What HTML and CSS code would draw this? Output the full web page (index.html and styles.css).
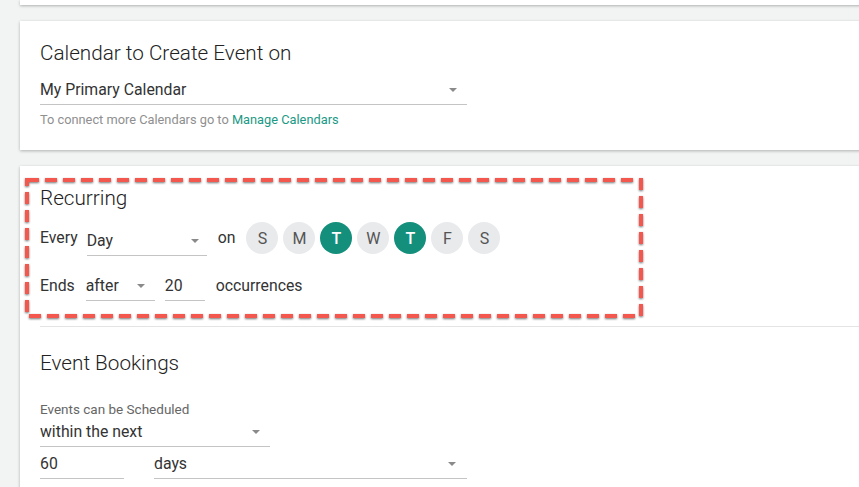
FILE: index.html
```html
<!DOCTYPE html>
<html>
<head>
<meta charset="utf-8">
<link rel="stylesheet" href="styles.css">
</head>
<body>
<div class="page">
  <div class="card card-stub"></div>

  <div class="card card-cal">
    <h2 class="title">Calendar to Create Event on</h2>
    <div class="field field-cal">
      <span class="value">My Primary Calendar</span>
      <span class="arrow"></span>
    </div>
    <p class="hint">To connect more Calendars go to <a class="link">Manage Calendars</a></p>
  </div>

  <div class="card card-main">
    <section class="recurring">
      <h2 class="title">Recurring</h2>
      <div class="row row-every">
        <span class="label">Every</span>
        <div class="field field-every">
          <span class="value">Day</span>
          <span class="arrow"></span>
        </div>
        <span class="label label-on">on</span>
        <div class="days">
          <span class="day">S</span>
          <span class="day">M</span>
          <span class="day on">T</span>
          <span class="day">W</span>
          <span class="day on">T</span>
          <span class="day">F</span>
          <span class="day">S</span>
        </div>
      </div>
      <div class="row row-ends">
        <span class="label">Ends</span>
        <div class="field field-after">
          <span class="value">after</span>
          <span class="arrow"></span>
        </div>
        <div class="field field-count">
          <span class="value">20</span>
        </div>
        <span class="label label-occ">occurrences</span>
      </div>
      <svg class="highlight" width="626" height="146" viewBox="0 0 626 146">
        <rect x="3" y="3" width="614" height="136" fill="none" stroke="#f4574e" stroke-width="4" stroke-dasharray="12 6"/>
      </svg>
    </section>

    <hr class="divider">

    <section class="bookings">
      <h2 class="title">Event Bookings</h2>
      <p class="sub">Events can be Scheduled</p>
      <div class="field field-within">
        <span class="value">within the next</span>
        <span class="arrow"></span>
      </div>
      <div class="row row-range">
        <div class="field field-num"><span class="value">60</span></div>
        <div class="field field-unit">
          <span class="value">days</span>
          <span class="arrow"></span>
        </div>
      </div>
    </section>
  </div>
</div>
</body>
</html>
```

FILE: styles.css
```css
html, body {
  margin: 0;
  padding: 0;
  background: #f2f3f3;
  overflow: hidden;
  height: 487px;
}

body {
  font-family: Roboto, "Liberation Sans", Arial, sans-serif;
  color: #333;
}

.page {
  margin-left: 20px;
  width: 900px;
  display: flex;
  flex-direction: column;
  gap: 16px;
}

.card {
  background: #fff;
  box-shadow: 0 1px 3px rgba(0, 0, 0, 0.28);
  padding: 20px 20px 23px 20px;
}

.card-stub {
  height: 5px;
  padding: 0;
}

.card-cal {
  padding-bottom: 22px;
}

.title {
  margin: 0;
  font-size: 20.7px;
  line-height: 24px;
  font-weight: 300;
  color: #222;
}

.field {
  position: relative;
  display: flex;
  align-items: center;
  border-bottom: 1px solid #c4c4c4;
  font-size: 15.8px;
  line-height: 20px;
  padding: 0 0 4px 0;
  box-sizing: border-box;
}

.value {
  color: #333;
}

.arrow {
  position: absolute;
  right: 10px;
  top: 8px;
  width: 0;
  height: 0;
  border-left: 4px solid transparent;
  border-right: 4px solid transparent;
  border-top: 4px solid #8a8a8a;
}

.field-cal {
  width: 427px;
  margin-top: 15px;
}

.hint {
  margin: 7px 0 0 0;
  font-size: 12.8px;
  line-height: 16px;
  color: #8f8f8f;
}

.link {
  color: #1b9985;
  text-decoration: none;
}

.card-main {
  padding-bottom: 40px;
}

.recurring {
  position: relative;
}

.row {
  display: flex;
  align-items: center;
}

.row-every {
  margin-top: 12px;
  height: 32px;
}

.label {
  font-size: 15.8px;
  line-height: 20px;
  color: #333;
}

.field-every {
  width: 120px;
  margin-left: 9px;
  margin-top: 10px;
}

.field-every .arrow {
  right: 8px;
}

.label-on {
  margin-left: 11px;
}

.days {
  display: flex;
  gap: 5px;
  margin-left: 11px;
}

.day {
  width: 32px;
  height: 32px;
  border-radius: 50%;
  background: #e8eaec;
  color: #555;
  font-size: 16px;
  display: flex;
  align-items: center;
  justify-content: center;
}

.day.on {
  background: #148f7c;
  color: #fff;
  font-weight: 500;
}

.row-ends {
  margin-top: 22px;
  align-items: flex-end;
}

.row-ends .label {
  padding-bottom: 5px;
}

.field-after {
  width: 69px;
  margin-left: 11px;
}

.field-after .arrow {
  right: 10px;
}

.field-count {
  width: 40px;
  margin-left: 10px;
}

.label-occ {
  margin-left: 11px;
}

.highlight {
  position: absolute;
  left: -16px;
  top: -9px;
  overflow: visible;
  filter: drop-shadow(0 1.5px 1px rgba(0, 0, 0, 0.55));
}

.divider {
  border: 0;
  border-top: 1px solid #e4e4e4;
  margin: 25px -20px 0 0;
}

.bookings {
  padding-top: 24px;
}

.sub {
  margin: 26px 0 0 0;
  font-size: 13.5px;
  line-height: 16px;
  color: #666;
}

.field-within {
  width: 230px;
  margin-top: 5px;
}

.row-range {
  margin-top: 7px;
  gap: 30px;
}

.field-num {
  width: 84px;
}

.field-unit {
  width: 313px;
}

.field-unit .arrow {
  right: 11px;
}
```
